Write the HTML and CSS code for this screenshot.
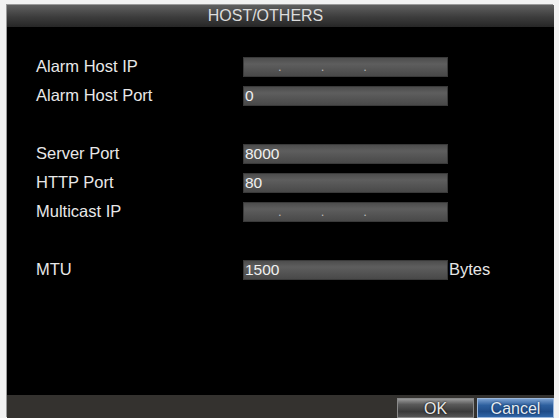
FILE: index.html
```html
<!DOCTYPE html>
<html>
<head>
<meta charset="utf-8">
<link rel="stylesheet" href="styles.css">
</head>
<body>
<div class="frame">
  <div class="title">HOST/OTHERS</div>
  <div class="content">
    <div class="row"><div class="label">Alarm Host IP</div><div class="field ip"><span class="dot">.</span><span class="dot">.</span><span class="dot">.</span></div></div>
    <div class="row"><div class="label">Alarm Host Port</div><div class="field">0</div></div>
    <div class="row"></div>
    <div class="row"><div class="label">Server Port</div><div class="field">8000</div></div>
    <div class="row"><div class="label">HTTP Port</div><div class="field">80</div></div>
    <div class="row"><div class="label">Multicast IP</div><div class="field ip"><span class="dot">.</span><span class="dot">.</span><span class="dot">.</span></div></div>
    <div class="row"></div>
    <div class="row"><div class="label">MTU</div><div class="field">1500</div><div class="unit">Bytes</div></div>
  </div>
  <div class="footer">
    <div class="btn ok">OK</div>
    <div class="btn cancel">Cancel</div>
  </div>
</div>
</body>
</html>
```
FILE: styles.css
```css
html, body {
  margin: 0;
  padding: 0;
  background: #f2f2f2;
  height: 418px;
  overflow: hidden;
}
.frame {
  margin: 5px 5px 0 7px;
  height: 413px;
  background: #000;
  display: flex;
  flex-direction: column;
  font-family: "Liberation Sans", Arial, sans-serif;
  color: #e6e6e6;
  box-shadow: -1px -1px 0 #9a9a9a;
}
.title {
  height: 22px;
  line-height: 22px;
  font-size: 16px;
  padding-right: 30px;
  text-align: center;
  color: #dcdcdc;
  background: linear-gradient(#606060, #3c3c3c 55%, #262626);
}
.content {
  flex: 1;
  padding: 25px 0 0 29px;
}
.row {
  height: 29px;
  display: flex;
  align-items: center;
}
.label {
  width: 207px;
  font-size: 16.5px;
  color: #e8e8e8;
}
.field {
  width: 205px;
  height: 20px;
  line-height: 20px;
  box-sizing: border-box;
  padding-left: 2px;
  font-size: 15.5px;
  color: #f0f0f0;
  background: linear-gradient(#4a4a4a, #5e5e5e 35%, #555 60%, #474747);
  box-shadow: inset 0 0 0 1px #3a3a3a;
}
.field.ip {
  display: flex;
  padding-left: 35px;
  gap: 39px;
}
.dot {
  color: #bbb;
  font-size: 13px;
}
.unit {
  font-size: 16.5px;
  padding-left: 1px;
}
.footer {
  height: 23px;
  background: #34322f;
  display: flex;
  justify-content: flex-end;
  align-items: flex-end;
  gap: 3px;
}
.btn {
  width: 77px;
  height: 20px;
  line-height: 20px;
  text-align: center;
  font-size: 16px;
  box-sizing: border-box;
}
.ok {
  color: #e8e8e8;
  background: linear-gradient(#9a9a9a, #5a5a5a 30%, #3a3a3a 70%, #555);
  border: 1px solid #8a8a8a;
  text-shadow: 0 0 2px #000;
}
.cancel {
  color: #e4ecf4;
  background: linear-gradient(#7aa0d0, #2d5f9e 35%, #1f4c88 70%, #2f66a8);
  border: 1px solid #9cb8dc;
  text-shadow: 0 0 2px #0a2040;
}
```
